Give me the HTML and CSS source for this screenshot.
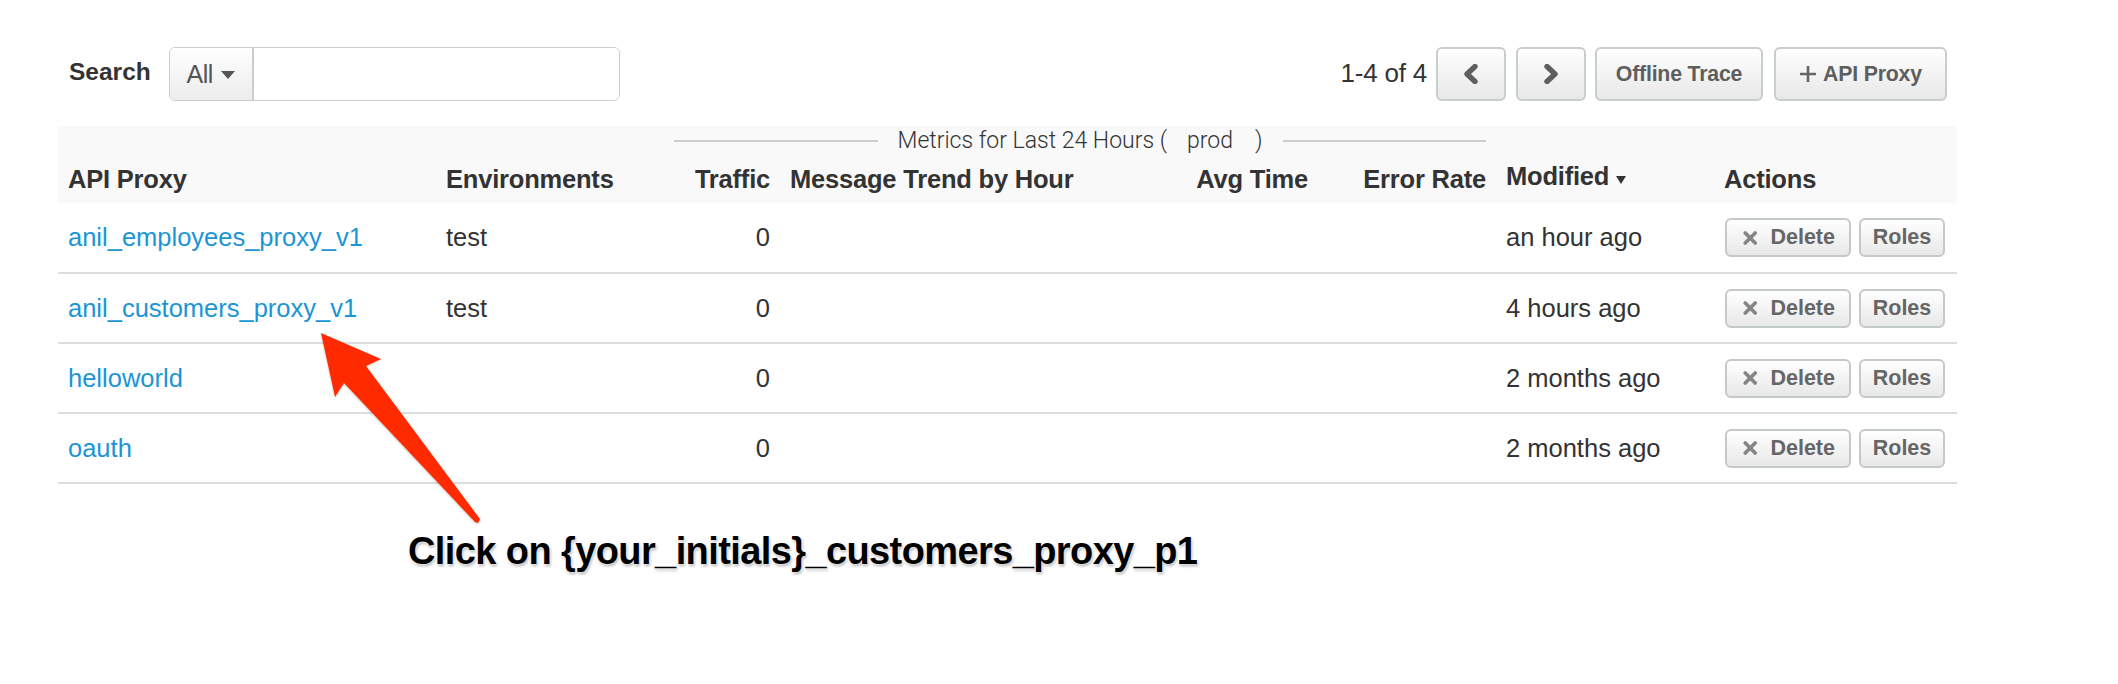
FILE: index.html
```html
<!DOCTYPE html>
<html>
<head>
<meta charset="utf-8">
<link rel="stylesheet" href="styles.css">
</head>
<body>
<div class="page">
  <div class="toolbar">
    <div class="search">
      <span class="search-label">Search</span>
      <div class="input-group">
        <div class="dropdown">All<span class="caret"></span></div>
        <div class="input"></div>
      </div>
    </div>
    <div class="pager">
      <span class="count">1-4 of 4</span>
      <button class="btn btn-icon"><svg width="18" height="20" viewBox="0 0 18 20"><path d="M13 2.5 L5 10 L13 17.5" fill="none" stroke="#5f5f5f" stroke-width="5.4" stroke-linejoin="round" stroke-linecap="round"/></svg></button>
      <button class="btn btn-icon"><svg width="18" height="20" viewBox="0 0 18 20"><path d="M5 2.5 L13 10 L5 17.5" fill="none" stroke="#5f5f5f" stroke-width="5.4" stroke-linejoin="round" stroke-linecap="round"/></svg></button>
      <button class="btn btn-text">Offline Trace</button>
      <button class="btn btn-text btn-add"><svg width="18" height="18" viewBox="0 0 18 18"><path d="M9 1 V17 M1 9 H17" stroke="#666" stroke-width="2.6"/></svg>API Proxy</button>
    </div>
  </div>

  <table class="grid">
    <colgroup>
      <col class="c-name"><col class="c-env"><col class="c-traffic"><col class="c-trend"><col class="c-avg"><col class="c-err"><col class="c-mod"><col class="c-act">
    </colgroup>
    <thead>
      <tr class="head-top">
        <th rowspan="2" class="h-bottom">API Proxy</th>
        <th rowspan="2" class="h-bottom">Environments</th>
        <th colspan="4" class="metrics"><div class="metrics-wrap"><span class="rule"></span><span class="metrics-text">Metrics for Last 24 Hours (<span class="env">prod</span>)</span><span class="rule"></span></div></th>
        <th rowspan="2" class="h-bottom h-mod">Modified<span class="sort"></span></th>
        <th rowspan="2" class="h-bottom">Actions</th>
      </tr>
      <tr class="head-sub">
        <th class="right">Traffic</th>
        <th>Message Trend by Hour</th>
        <th class="right">Avg Time</th>
        <th class="right">Error Rate</th>
      </tr>
    </thead>
    <tbody>
      <tr>
        <td><a class="link">anil_employees_proxy_v1</a></td>
        <td>test</td>
        <td class="right">0</td>
        <td></td><td></td><td></td>
        <td>an hour ago</td>
        <td><div class="actions"><button class="btn btn-sm btn-del"><svg width="16" height="16" viewBox="0 0 16 16"><path d="M2.5 2.5 L13.5 13.5 M13.5 2.5 L2.5 13.5" stroke="#858585" stroke-width="4" stroke-linecap="round"/></svg>Delete</button><button class="btn btn-sm">Roles</button></div></td>
      </tr>
      <tr>
        <td><a class="link">anil_customers_proxy_v1</a></td>
        <td>test</td>
        <td class="right">0</td>
        <td></td><td></td><td></td>
        <td>4 hours ago</td>
        <td><div class="actions"><button class="btn btn-sm btn-del"><svg width="16" height="16" viewBox="0 0 16 16"><path d="M2.5 2.5 L13.5 13.5 M13.5 2.5 L2.5 13.5" stroke="#858585" stroke-width="4" stroke-linecap="round"/></svg>Delete</button><button class="btn btn-sm">Roles</button></div></td>
      </tr>
      <tr>
        <td><a class="link">helloworld</a></td>
        <td></td>
        <td class="right">0</td>
        <td></td><td></td><td></td>
        <td>2 months ago</td>
        <td><div class="actions"><button class="btn btn-sm btn-del"><svg width="16" height="16" viewBox="0 0 16 16"><path d="M2.5 2.5 L13.5 13.5 M13.5 2.5 L2.5 13.5" stroke="#858585" stroke-width="4" stroke-linecap="round"/></svg>Delete</button><button class="btn btn-sm">Roles</button></div></td>
      </tr>
      <tr>
        <td><a class="link">oauth</a></td>
        <td></td>
        <td class="right">0</td>
        <td></td><td></td><td></td>
        <td>2 months ago</td>
        <td><div class="actions"><button class="btn btn-sm btn-del"><svg width="16" height="16" viewBox="0 0 16 16"><path d="M2.5 2.5 L13.5 13.5 M13.5 2.5 L2.5 13.5" stroke="#858585" stroke-width="4" stroke-linecap="round"/></svg>Delete</button><button class="btn btn-sm">Roles</button></div></td>
      </tr>
    </tbody>
  </table>

  <svg class="arrow" width="200" height="220" viewBox="0 0 200 220">
    <defs>
      <filter id="sh" x="-20%" y="-20%" width="140%" height="140%"><feDropShadow dx="0" dy="1" stdDeviation="1.2" flood-color="#000" flood-opacity="0.25"/></filter>
    </defs>
    <polygon points="21,13 81,39 66,46 180,199 178,203 175,202 44,63 35,77" fill="#ff2a00" filter="url(#sh)"/>
  </svg>
  <div class="callout">Click on {your_initials}_customers_proxy_p1</div>
</div>
</body>
</html>
```

FILE: styles.css
```css
* { box-sizing: border-box; }
html, body { margin: 0; padding: 0; background: #fff; }
body {
  font-family: "Liberation Sans", Arial, Helvetica, sans-serif;
  color: #333;
  font-size: 25.5px;
}
.page {
  position: relative;
  width: 2118px;
  height: 684px;
  overflow: hidden;
}
.toolbar {
  margin: 47px 0 0 58px;
  width: 1899px;
  height: 54px;
  padding: 0 10px 0 11px;
  display: flex;
  align-items: center;
  justify-content: space-between;
}
.search { display: flex; align-items: center; gap: 18px; }
.search-label { font-weight: bold; font-size: 24.5px; color: #333; margin-top: -4px; }
.input-group {
  display: flex;
  width: 451px;
  height: 54px;
  border: 1px solid #ccc;
  border-radius: 6px;
  overflow: hidden;
}
.dropdown {
  width: 84px;
  display: flex;
  align-items: center;
  justify-content: center;
  gap: 8px;
  font-size: 25px;
  color: #555;
  background: linear-gradient(#fff, #ececec);
  border-right: 2px solid #ccc;
  letter-spacing: -0.5px;
}
.caret {
  width: 0; height: 0;
  border-left: 7px solid transparent;
  border-right: 7px solid transparent;
  border-top: 8px solid #555;
  margin-top: 2px;
}
.input { flex: 1; background: #fff; }
.pager { display: flex; align-items: center; gap: 9px; }
.count { font-size: 26px; color: #333; margin-left: -3px; margin-top: -2px; letter-spacing: -0.2px; }
.btn {
  font-family: "Liberation Sans", Arial, Helvetica, sans-serif;
  font-weight: bold;
  color: #5e5e5e;
  background: linear-gradient(#ffffff, #e8e8e8);
  border: 2px solid #c8cdce;
  border-radius: 6px;
  display: inline-flex;
  align-items: center;
  justify-content: center;
  padding: 0;
  cursor: pointer;
}
.pager .btn { height: 54px; }
.btn-icon { width: 70px; }
.btn-icon + .btn-icon { margin-left: 1px; }
.btn-text { font-size: 21.3px; padding: 0 18px; letter-spacing: -0.2px; }
.btn-text:nth-of-type(3) { width: 168px; }
.btn-add { width: 173px; gap: 6px; margin-left: 2px; }

.grid {
  margin-left: 58px;
  width: 1899px;
  border-collapse: collapse;
  table-layout: fixed;
  margin-top: 25px;
}
.c-name { width: 378px; }
.c-env { width: 228px; }
.c-traffic { width: 116px; }
.c-trend { width: 404px; }
.c-avg { width: 134px; }
.c-err { width: 178px; }
.c-mod { width: 218px; }
.c-act { width: 243px; }

thead { background: #f9f9f9; }
th {
  text-align: left;
  font-weight: bold;
  font-size: 25.5px;
  color: #333;
  padding: 0 10px;
  white-space: nowrap;
  line-height: 30px;
  letter-spacing: -0.2px;
}
.head-top { height: 28px; }
.head-sub { height: 47px; }
.head-sub th { vertical-align: bottom; padding-bottom: 9px; }
.h-bottom { vertical-align: bottom; padding-bottom: 9px; }
.h-mod { padding-bottom: 12px; }
.sort {
  display: inline-block;
  width: 0; height: 0;
  border-left: 5px solid transparent;
  border-right: 5px solid transparent;
  border-top: 8px solid #333;
  margin-left: 7px;
  vertical-align: 1px;
}
.right { text-align: right; }
.metrics { padding: 0 10px; vertical-align: middle; }
.metrics-wrap { display: flex; align-items: center; gap: 20px; }
.rule { flex: 1; height: 2px; background: #cccccc; }
.metrics-text {
  font-family: Roboto, "Liberation Sans", sans-serif;
  font-weight: 300;
  font-size: 23px;
  color: #333;
  letter-spacing: 0;
}
.env { padding: 0 22px 0 20px; }

td {
  height: 70px;
  padding: 0 10px;
  border-bottom: 2px solid #dddddd;
  vertical-align: middle;
  white-space: nowrap;
  font-size: 25.5px;
  color: #333;
}
.link { color: #1b95d5; text-decoration: none; }
.actions { display: flex; gap: 8px; padding-left: 1px; }
.btn-sm { height: 39px; font-size: 21.5px; padding: 0 14px; color: #666; border-color: #c4c9ca; }
.btn-del { width: 126px; gap: 13px; padding: 0 14px 0 16px; }
.btn-sm:not(.btn-del) { width: 86px; }

.arrow {
  position: absolute;
  left: 300px;
  top: 320px;
}
.callout {
  position: absolute;
  left: 408px;
  top: 530px;
  font-family: "Liberation Sans", Arial, sans-serif;
  font-weight: bold;
  font-size: 38px;
  letter-spacing: -0.6px;
  color: #000;
  white-space: nowrap;
  text-shadow: 0 0 2px #fff, 0 0 3px #fff, 1px 2px 3px rgba(0,0,0,0.35);
}
```
